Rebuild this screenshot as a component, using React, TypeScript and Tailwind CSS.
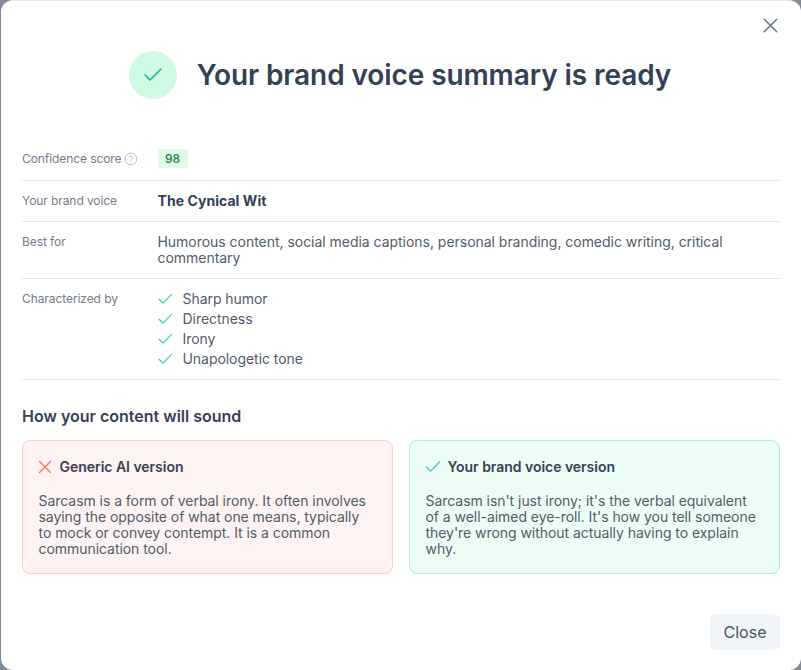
import React from "react";

const Check = ({ className, sw = 1.5 }: { className: string; sw?: number }) => (
  <svg viewBox="0 0 24 24" fill="none" stroke="currentColor" strokeWidth={sw} strokeLinecap="round" strokeLinejoin="round" className={className}>
    <path d="M20 6 9 17l-5-5" />
  </svg>
);
const Cross = ({ className, sw = 1.5 }: { className: string; sw?: number }) => (
  <svg viewBox="0 0 24 24" fill="none" stroke="currentColor" strokeWidth={sw} strokeLinecap="round" strokeLinejoin="round" className={className}>
    <path d="M18 6 6 18M6 6l12 12" />
  </svg>
);

const Row = ({ label, children, cls = "" }: { label: React.ReactNode; children: React.ReactNode; cls?: string }) => (
  <div className={`flex border-b border-[#e5e7eb] ${cls}`}>
    <div className="w-[135.5px] shrink-0 text-[12px] leading-[16px] tracking-[-0.08px] text-[#737c8a]">{label}</div>
    <div className="flex-1 min-w-0">{children}</div>
  </div>
);

export default function App() {
  return (
    <div className="h-[670px] w-[801px] bg-[#7f8a94] overflow-hidden" style={{ fontFamily: "Inter, sans-serif" }}>
      <div className="relative ml-[1px] h-[670px] w-[800px] rounded-[12px] border-t border-[#e5e7eb] bg-white pl-[21px] pr-[21px] flex flex-col">
        <button className="absolute right-[18.5px] top-[12px] text-[#64748b]">
          <Cross className="h-[25px] w-[25px]" sw={1.4} />
        </button>
        <div className="flex items-center justify-center gap-[20px] pt-[50px] h-[148px] pb-[50px] pr-[2px]">
          <div className="flex h-[48px] w-[48px] items-center justify-center rounded-full bg-[#d1fae5]">
            <Check className="h-[24px] w-[24px] text-[#10b981]" />
          </div>
          <h1 className="text-[28px] font-semibold leading-[36px] tracking-[-0.09px] text-[#334155]">Your brand voice summary is ready</h1>
        </div>
        <Row cls="h-[32px]" label={
          <span className="flex items-center gap-[3px] pt-[2px]">Confidence score
            <svg viewBox="0 0 24 24" fill="none" stroke="#b8c1cc" strokeWidth="1.7" className="h-[14px] w-[14px]"><circle cx="12" cy="12" r="10" /><path strokeLinecap="round" d="M9.2 9.5a2.9 2.9 0 1 1 4.2 2.6c-.9.5-1.4 1-1.4 2M12 17.2v.1" /></svg>
          </span>
        }>
          <span className="block w-fit rounded-[3px] bg-[#dcfce7] px-[7.5px] text-[12px] font-medium leading-[19px] text-[#15803d]">98</span>
        </Row>
        <Row cls="h-[41px] items-center" label="Your brand voice">
          <span className="block -mt-[1px] text-[14px] font-bold tracking-[0.05px] text-[#334155]">The Cynical Wit</span>
        </Row>
        <Row cls="h-[57px] pt-[12px]" label="Best for">
          <p className="text-[14px] leading-[16px] tracking-[-0.03px] text-[#525c6b]">Humorous content, social media captions, personal branding, comedic writing, critical commentary</p>
        </Row>
        <Row cls="h-[101px] pt-[10px]" label={<span className="block pt-[2px]">Characterized by</span>}>
          <ul className="text-[14px] leading-[20px] tracking-[-0.05px] text-[#525c6b]">
            {["Sharp humor", "Directness", "Irony", "Unapologetic tone"].map((t) => (
              <li key={t} className="flex items-center gap-[8.5px]">
                <Check className="-ml-[2px] h-[18.5px] w-[18.5px] text-[#34d399]" sw={1.6} />
                {t}
              </li>
            ))}
          </ul>
        </Row>
        <h2 className="mt-[24px] text-[16px] font-semibold leading-[24px] text-[#374151]">How your content will sound</h2>
        <div className="mt-[12px] grid grid-cols-2 gap-[16px]">
          <div className="h-[134px] rounded-[8px] border border-[#fecaca] bg-[#fef2f2] pl-[15.5px] pr-[17px] pt-[16px]">
            <div className="flex h-[20px] items-center gap-[4px] text-[14px] font-semibold leading-[20px] tracking-[-0.03px] text-[#374151]">
              <Cross className="-ml-[5px] h-[22px] w-[22px] text-[#f87171]" />Generic AI version
            </div>
            <p className="mt-[16px] text-[14px] leading-[16px] tracking-[-0.05px] text-[#525c6b]">Sarcasm is a form of verbal irony. It often involves saying the opposite of what one means, typically to mock or convey contempt. It is a common communication tool.</p>
          </div>
          <div className="h-[134px] rounded-[8px] border border-[#a7f3d0] bg-[#ecfdf5] px-[15.5px] pt-[16px]">
            <div className="flex h-[20px] items-center gap-[5px] text-[14px] font-semibold leading-[20px] tracking-[-0.03px] text-[#374151]">
              <Check className="-ml-[3px] h-[20px] w-[20px] text-[#34d399]" />Your brand voice version
            </div>
            <p className="mt-[16px] text-[14px] leading-[16px] tracking-[-0.05px] text-[#525c6b]">Sarcasm isn't just irony; it's the verbal equivalent of a well-aimed eye-roll. It's how you tell someone they're wrong without actually having to explain why.</p>
          </div>
        </div>
        <div className="mt-[40px] flex justify-end">
          <button className="h-[36px] w-[70px] rounded-[6px] bg-[#f1f5f9] text-[16px] text-[#475569]">Close</button>
        </div>
      </div>
    </div>
  );
}
